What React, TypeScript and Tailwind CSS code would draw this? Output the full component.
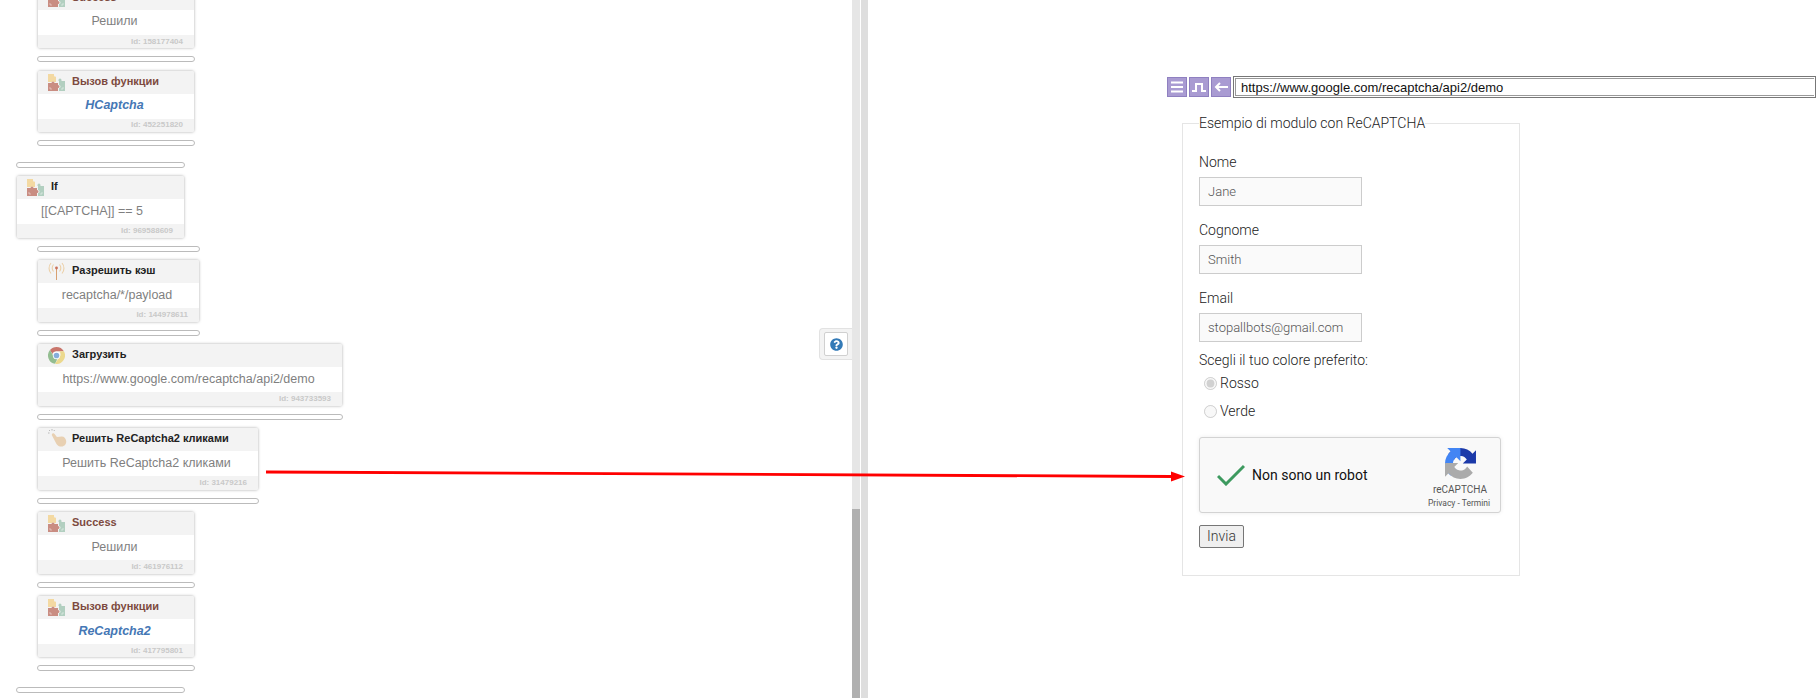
import { FaQuestionCircle } from "react-icons/fa";

type Step = {
    id: string;
    title: string;
    text: string;
    width: string;
    slot: string;
    icon: "puzzle" | "antenna" | "chrome" | "hand";
    call?: boolean;
    fn?: boolean;
};

const sans = "font-['Liberation_Sans',Arial,sans-serif]";
const roboto = "font-['Roboto',sans-serif]";

const PuzzleIcon = () => (
    <svg width="17" height="17" viewBox="0 0 17 17">
        <path d="M0 0h6v1.5a1.5 1.5 0 0 0 2 1V8H6a1.5 1.5 0 0 0-2 0H0z" fill="#f3d9a2" />
        <path d="M0 9h3.5a1.5 1.5 0 0 1 3 0H10v2a1.5 1.5 0 0 1 0 3v3H0z" fill="#c98d82" />
        <path d="M10.5 7V6a1.5 1.5 0 0 1 3 0v1H17v10h-6v-3a1.5 1.5 0 0 0 0-3V7z" fill="#b2cfc0" />
        <path d="M2 13v2h2M13 15h2v-2" stroke="#fff" strokeWidth="0.6" fill="none" opacity="0.7" />
    </svg>
);

const AntennaIcon = () => (
    <svg width="17" height="18" viewBox="0 0 17 18" fill="none">
        <path d="M8.5 6v12" stroke="#d8a070" strokeWidth="1" />
        <circle cx="8.5" cy="6" r="1.4" fill="#c9705a" />
        <path d="M5.5 2.5c-1.5 2-1.5 5 0 7M3 1c-2.6 3-2.6 7.500 0 10.500M11.500 2.500c1.500 2 1.500 5 0 7M14 1c2.600 3 2.600 7.500 0 10.500" stroke="#ecd0a8" strokeWidth="1.1" />
    </svg>
);

const ChromeIcon = () => (
    <svg width="17" height="17" viewBox="0 0 24 24">
        <path d="M12 0a12 12 0 0 1 10.400 6H12a6 6 0 0 0-5.700 4L2.800 4.300A12 12 0 0 1 12 0z" fill="#c9766c" />
        <path d="M2.800 4.300l5 8.700a4.500 4.500 0 0 0 5.700 3.400L10 23.800A12 12 0 0 1 2.800 4.300z" fill="#93bd90" />
        <path d="M22.400 6A12 12 0 0 1 10 23.800l5.300-8.800A6 6 0 0 0 16 6z" fill="#ecd98e" />
        <circle cx="12" cy="12" r="5.200" fill="#fff" />
        <circle cx="12" cy="12" r="4" fill="#86aedb" />
    </svg>
);

const HandIcon = () => (
    <svg width="20" height="20" viewBox="0 0 20 20">
        <path d="M4.500 4.500c.8-.6 1.600-.3 2.100.4l2.300 3.200 5-.6c2 0 4 2 4.300 4.500.3 3-1.700 5.500-4.700 5.500-2.300 0-4-.9-5-2.600L4 6.500c-.4-.7-.2-1.500.5-2z" fill="#e8d0b2" />
        <path d="M1 1l1 1M4 0v1.500M0 4h1.500M6.500 1L6 2" stroke="#aaa" strokeWidth="0.8" />
    </svg>
);

const icons = {
    puzzle: <PuzzleIcon />,
    antenna: <AntennaIcon />,
    chrome: <ChromeIcon />,
    hand: <HandIcon />,
};

const RecaptchaLogo = () => (
    <svg width="31" height="31" viewBox="0 0 64 64">
        <path d="M64 31.955l-.033-1.37V4.687l-7.16 7.16C50.948 4.674 42.033.093 32.05.093c-10.4 0-19.622 4.96-25.458 12.64l11.736 11.86a15.55 15.55 0 0 1 4.754-5.334c2.05-1.6 4.952-2.906 8.968-2.906.485 0 .86.057 1.135.163 4.976.393 9.288 3.14 11.828 7.124l-8.307 8.307 26.295.008" fill="#1c3aa9" />
        <path d="M31.862.002l-1.37.033H4.594l7.16 7.16C4.58 13.055 0 21.97 0 31.953c0 10.4 4.96 19.622 12.64 25.458L24.5 45.676a15.55 15.55 0 0 1-5.334-4.754c-1.6-2.05-2.906-4.952-2.906-8.968 0-.485.057-.86.163-1.135.393-4.976 3.14-9.288 7.124-11.828l8.307 8.307.008-26.295" fill="#4285f4" />
        <path d="M.002 31.953l.033 1.37v25.898l7.16-7.16c5.86 7.173 14.775 11.754 24.76 11.754 10.4 0 19.622-4.96 25.458-12.64L45.677 38.32a15.55 15.55 0 0 1-4.754 5.334c-2.05 1.6-4.952 2.906-8.968 2.906-.485 0-.86-.057-1.135-.163-4.976-.393-9.288-3.14-11.828-7.124l8.307-8.307-26.295-.008" fill="#ababab" />
    </svg>
);

const Slot = ({ className }: { className: string }) => (
    <div className={`h-[6px] rounded-[3px] border border-[#bbb] bg-white ${className}`} />
);

const StepCard = ({ step, noSlot, textPad = "pr-[3px]" }: { step: Step; noSlot?: boolean; textPad?: string }) => (
    <div className={`${step.slot} flex flex-col`}>
        <div className={`${step.width} mx-px h-[61.6px] rounded-[2px] bg-white shadow-[0_0_3px_rgba(0,0,0,0.35)] flex flex-col overflow-hidden`}>
            <div className="h-[23px] shrink-0 bg-[#f3f3f3] flex items-center pl-[10px]">
                <span className="w-[24px] shrink-0 flex items-center">{icons[step.icon]}</span>
                <span className={`${sans} pb-[2px] text-[11px] font-bold ${step.call ? "text-[#7d4a40]" : "text-[#222]"}`}>{step.title}</span>
            </div>
            <div className={`${sans} h-[25px] shrink-0 pb-px flex items-center justify-center whitespace-nowrap text-[12.5px] ${textPad} ${step.fn ? "italic font-bold text-[#4577b5]" : "text-[#7f7f7f]"}`}>
                {step.text}
            </div>
            <div className={`${sans} flex-1 bg-[#f3f3f3] flex items-center justify-end pr-[11px] text-[8px] font-bold text-[#c9c9c9]`}>
                Id: {step.id}
            </div>
        </div>
        {!noSlot && <Slot className="mt-2 w-full" />}
    </div>
);

const small = { width: "w-[156px]", slot: "w-[158px]" };

const firstSteps: Step[] = [
    { id: "158177404", title: "Success", text: "Решили", icon: "puzzle", call: true, ...small },
    { id: "452251820", title: "Вызов функции", text: "HCaptcha", icon: "puzzle", call: true, fn: true, ...small },
];

const ifStep: Step = { id: "969588609", title: "If", text: "[[CAPTCHA]] == 5", icon: "puzzle", width: "w-[167px]", slot: "w-[169px]" };

const nextSteps: Step[] = [
    { id: "144978611", title: "Разрешить кэш", text: "recaptcha/*/payload", icon: "antenna", width: "w-[161px]", slot: "w-[163px]" },
    { id: "943733593", title: "Загрузить", text: "https://www.google.com/recaptcha/api2/demo", icon: "chrome", width: "w-[304px]", slot: "w-[306px]" },
    { id: "31479216", title: "Решить ReCaptcha2 кликами", text: "Решить ReCaptcha2 кликами", icon: "hand", width: "w-[220px]", slot: "w-[222px]" },
    { id: "461976112", title: "Success", text: "Решили", icon: "puzzle", call: true, ...small },
    { id: "417795801", title: "Вызов функции", text: "ReCaptcha2", icon: "puzzle", call: true, fn: true, ...small },
];

const ScriptPanel = () => (
    <div className="w-[852px] shrink-0 h-full overflow-hidden pl-[16px]">
        {/* first card is scrolled out at the top */}
        <div className="-mt-[13.3px] ml-[21px] flex flex-col gap-[8.4px]">
            {firstSteps.map((s) => (
                <StepCard key={s.id} step={s} />
            ))}
        </div>
        <div className="mt-[15.3px] flex flex-col gap-[8.4px]">
            <Slot className="w-[169px]" />
            <StepCard step={ifStep} noSlot textPad="pr-[17px]" />
        </div>
        <div className="mt-2 ml-[21px] flex flex-col gap-[8.4px]">
            <Slot className="w-[163px]" />
            {nextSteps.map((s) => (
                <StepCard key={s.id} step={s} />
            ))}
        </div>
        <Slot className="mt-[15.3px] w-[169px]" />
    </div>
);

const ToolButton = ({ children }: { children: React.ReactNode }) => (
    <div className="size-[20px] bg-[#a99bd2] border border-[#8f80c0] flex items-center justify-center">
        <svg width="16" height="16" viewBox="0 0 16 16" fill="none" stroke="#fff" strokeWidth="2">
            {children}
        </svg>
    </div>
);

const Field = ({ label, value, className }: { label: string; value: string; className: string }) => (
    <div className={className}>
        <label className="block text-[14px] leading-[20px] font-light text-[#222]">{label}</label>
        <input
            readOnly
            value={value}
            className="mt-[5px] block h-[29px] w-[163px] border border-[#ccc] bg-[#fafafa] px-2 text-[13px] font-light text-[#555] outline-none"
        />
    </div>
);

const Radio = ({ label, checked, className }: { label: string; checked?: boolean; className: string }) => (
    <label className={`flex items-center gap-[3px] pl-[5px] h-[20px] text-[14px] font-light text-[#222] ${className}`}>
        <input type="radio" disabled defaultChecked={checked} name="color" className="m-0 size-[13px]" />
        {label}
    </label>
);

const RecaptchaBox = () => (
    <div className="mt-[16px] h-[76px] w-[302px] rounded-[3px] border border-[#d3d3d3] bg-[#f9f9f9] shadow-[0_0_4px_rgba(0,0,0,0.08)] flex items-center pl-[17px] pr-[5px]">
        <svg width="28" height="22" viewBox="0 0 28 22" fill="none" className="shrink-0">
            <path d="M1 12l8 8L27 2" stroke="#3d9a5f" strokeWidth="3" />
        </svg>
        <span className="ml-[7px] text-[14px] text-[#111]">Non sono un robot</span>
        <div className="ml-auto self-start mt-[10px] flex flex-col items-center w-[70px]">
            <RecaptchaLogo />
            <span className="mt-[5px] text-[10px] leading-[12px] text-[#555]">reCAPTCHA</span>
            <span className="mt-px pr-[2px] text-[8.5px] leading-[12px] text-[#555] whitespace-nowrap">Privacy - Termini</span>
        </div>
    </div>
);

const BrowserPanel = () => (
    <div className={`flex-1 min-w-0 overflow-hidden pt-[76px] ${roboto}`}>
        <div className="flex items-center gap-[2px] pl-[299px]">
            <ToolButton>
                <path d="M2 3.500h12M2 8h12M2 12.500h12" />
            </ToolButton>
            <ToolButton>
                <path d="M1 12h4V5h6v7h4" />
            </ToolButton>
            <ToolButton>
                <path d="M15 8H3M7 4L3 8l4 4" />
            </ToolButton>
            <div className="h-[22px] flex-1 border border-[#777] p-px">
                <div className={`${sans} h-full border border-[#999] border-r-0 pl-[5px] pt-px text-[13px] leading-[16px] text-[#111] whitespace-nowrap`}>
                    https://www.google.com/recaptcha/api2/demo
                </div>
            </div>
        </div>
        <fieldset className="mt-[17px] ml-[314px] w-[338px] h-[461px] border border-[#e5e5e5] px-4">
            <legend className="text-[14px] leading-[16px] font-light text-[#222]">Esempio di modulo con ReCAPTCHA</legend>
            <Field label="Nome" value="Jane" className="mt-[21px]" />
            <Field label="Cognome" value="Smith" className="mt-[14px]" />
            <Field label="Email" value="stopallbots@gmail.com" className="mt-[14px]" />
            <p className="mt-[8px] text-[14px] leading-[20px] font-light text-[#222]">Scegli il tuo colore preferito:</p>
            <Radio label="Rosso" checked className="mt-[3px]" />
            <Radio label="Verde" className="mt-[8px]" />
            <RecaptchaBox />
            <button className="mt-[12px] block h-[23px] w-[45px] rounded-[2px] border border-[#767676] bg-[#efefef] text-[14px] font-light text-[#333]">
                Invia
            </button>
        </fieldset>
    </div>
);

export default function App() {
    return (
        <div className="relative flex h-[698px] w-[1816px] overflow-hidden bg-white">
            <ScriptPanel />
            <div className="w-[8px] shrink-0 h-full bg-[#e6e6e6] flex flex-col justify-end">
                <div className="h-[189px] bg-[#b0b0b0]" />
            </div>
            <div className="ml-px w-[7px] shrink-0 h-full bg-[#dedede]" />
            <BrowserPanel />

            {/* help tab on the splitter */}
            <div className="absolute left-[819px] top-[328px] h-[32px] w-[33px] rounded-l-[4px] border border-r-0 border-[#e2e2e2] bg-[#f3f3f3] flex items-center pl-[4px]">
                <div className="size-[24px] rounded-[2px] border border-[#d0d0d0] bg-white flex items-center justify-center">
                    <FaQuestionCircle className="text-[#337ab7] text-[13px]" />
                </div>
            </div>

            {/* annotation arrow over the screenshot */}
            <svg className="absolute left-0 top-0 pointer-events-none" width="1816" height="698">
                <path d="M266 472L1173 476.500" stroke="#ff0000" strokeWidth="2.800" fill="none" />
                <path d="M1171 471.500L1185 476.600L1171 481.500z" fill="#ff0000" />
            </svg>
        </div>
    );
}
